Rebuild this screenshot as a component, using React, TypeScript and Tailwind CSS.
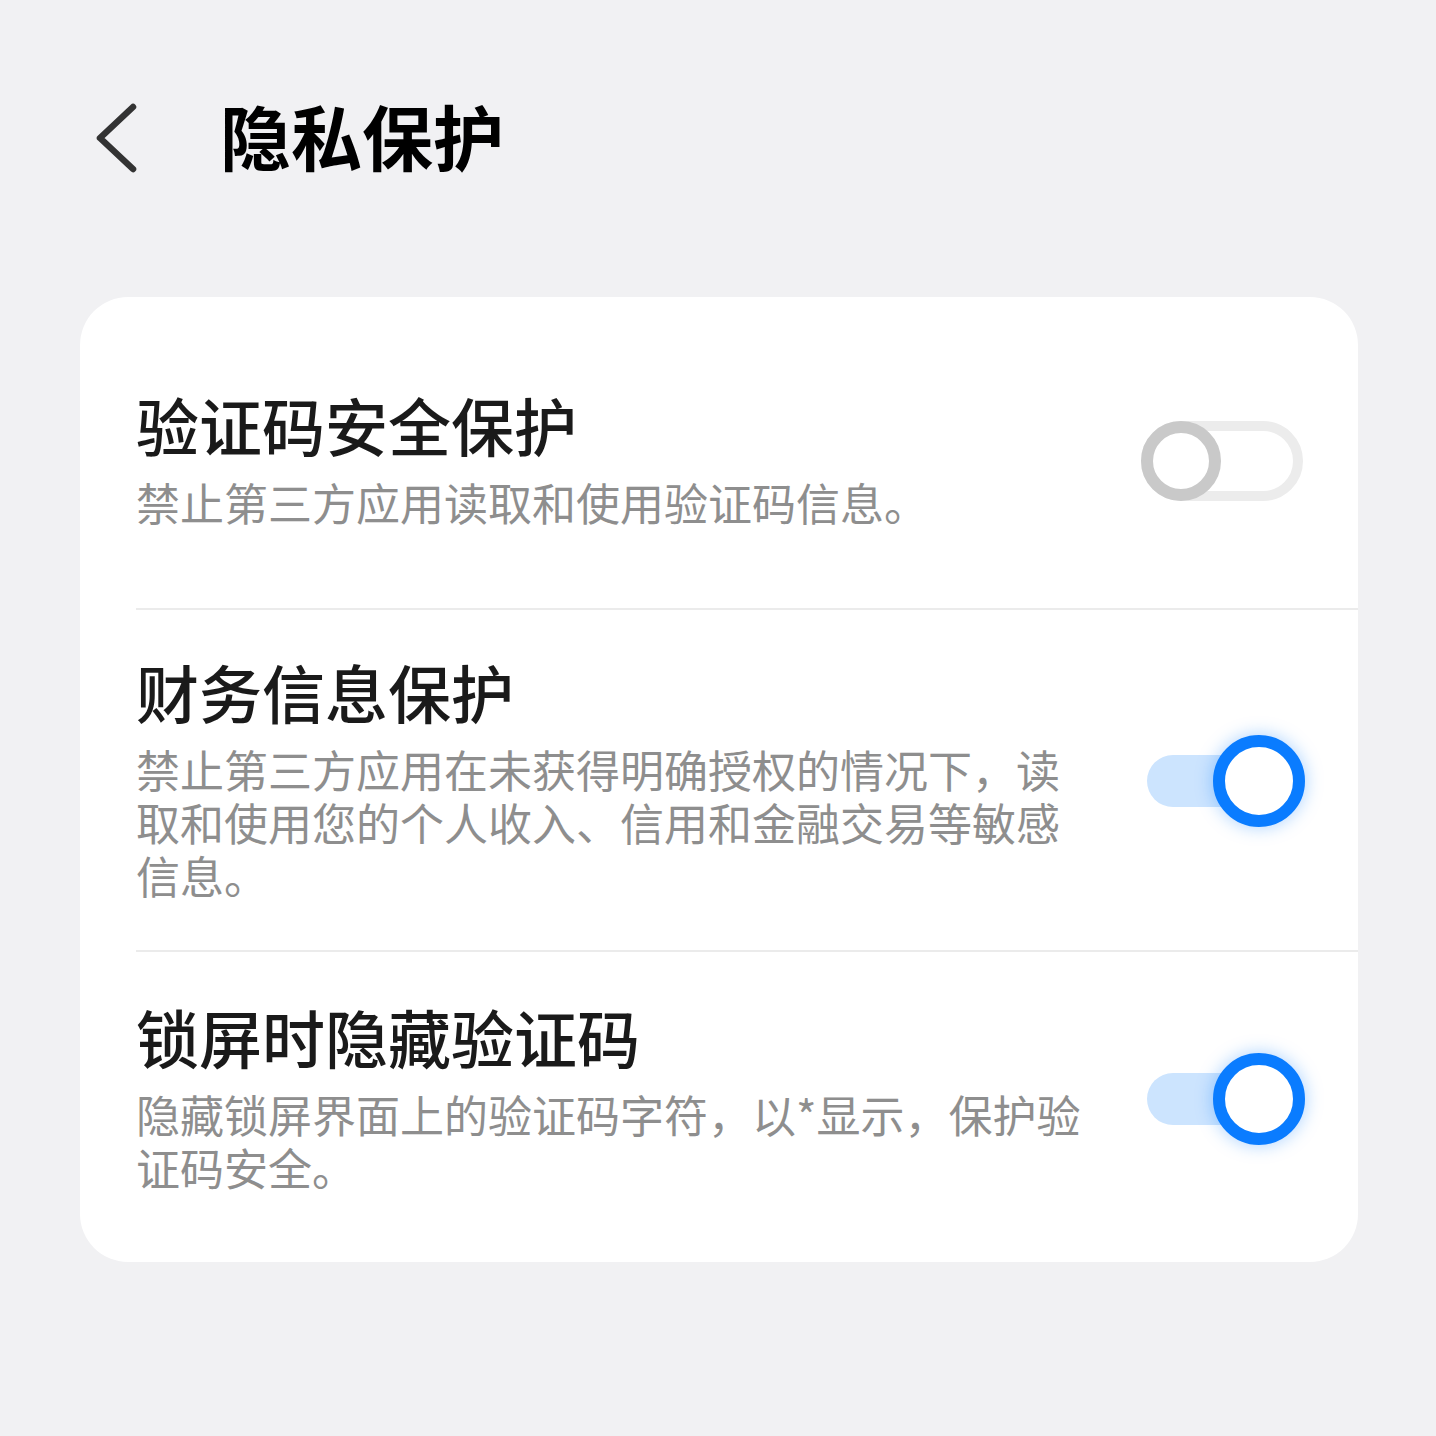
const settings = [
  {
    title: "验证码安全保护",
    description: "禁止第三方应用读取和使用验证码信息。",
    on: false,
    pad: "pt-[89px] pb-[79px]",
  },
  {
    title: "财务信息保护",
    description:
      "禁止第三方应用在未获得明确授权的情况下，读取和使用您的个人收入、信用和金融交易等敏感信息。",
    on: true,
    pad: "pt-[43px] pb-[48px] border-t-2 border-[#ebebeb]",
  },
  {
    title: "锁屏时隐藏验证码",
    description: "隐藏锁屏界面上的验证码字符，以*显示，保护验证码安全。",
    on: true,
    pad: "pt-[46px] pb-[68px] border-t-2 border-[#ebebeb]",
  },
];

function Toggle({ on }: { on: boolean }) {
  if (!on) {
    return (
      <div className="relative mr-[2px] mt-[6px] h-[80px] w-[162px] shrink-0 rounded-full border-[10px] border-[#ececec] bg-white">
        <div className="absolute -left-[10px] -top-[10px] h-[80px] w-[80px] rounded-full border-[12px] border-[#c9c9c9] bg-white" />
      </div>
    );
  }
  return (
    <div className="mt-[6px] flex h-[92px] w-[158px] shrink-0 items-center">
      <div className="-mr-[74px] h-[52px] w-[140px] rounded-full bg-[#cce4fe]" />
      <div className="relative h-[92px] w-[92px] rounded-full border-[12px] border-[#0a7cff] bg-white shadow-[0_0_18px_rgba(10,124,255,0.35)]" />
    </div>
  );
}

export default function App() {
  return (
    <div className="h-[1436px] overflow-hidden bg-[#f1f1f3] pt-[97px] font-['Noto_Sans_CJK_SC',sans-serif]">
      <div className="flex h-[80px] items-center">
        <svg
          width="44"
          height="76"
          viewBox="0 0 44 76"
          className="ml-[94px]"
          fill="none"
          stroke="#333333"
          strokeWidth="6.5"
          strokeLinecap="round"
          strokeLinejoin="round"
        >
          <polyline points="39,8 6,39 39,70" />
        </svg>
        <h1 className="mb-[6px] ml-[82px] text-[71px] font-bold leading-none text-black">隐私保护</h1>
      </div>

      <div className="ml-[80px] mt-[120px] w-[1278px] rounded-[48px] bg-white pl-[56px]">
        {settings.map((s) => (
          <div key={s.title} className={`flex items-center justify-between pr-[53px] ${s.pad}`}>
            <div className="w-[952px]">
              <div className="text-[63px] font-medium leading-[76px] text-[#1a1a1a]">{s.title}</div>
              <p className="mt-[14px] text-[44px] leading-[53px] text-[#8e8e8e]">{s.description}</p>
            </div>
            <Toggle on={s.on} />
          </div>
        ))}
      </div>
    </div>
  );
}
